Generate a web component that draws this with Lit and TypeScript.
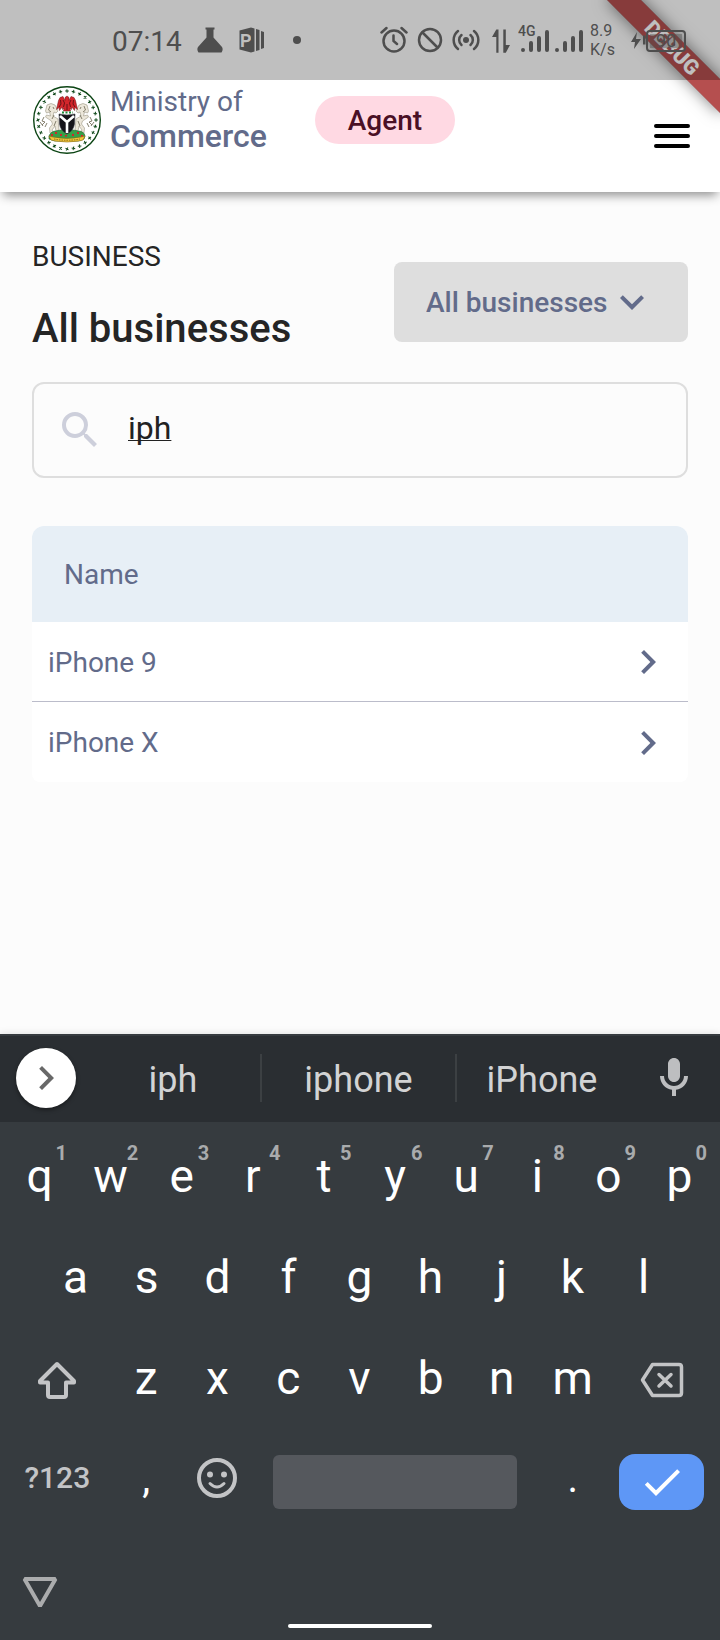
import { LitElement, html, css, svg } from "lit";
import { customElement, state } from "lit/decorators.js";

const chevronRight = html`<svg class="icon" viewBox="0 0 24 24" aria-hidden="true">
  <path d="M8.59 16.59 13.17 12 8.59 7.41 10 6l6 6-6 6z" />
</svg>`;

const shared = css`
  * {
    box-sizing: border-box;
  }
  button {
    font: inherit;
    color: inherit;
    background: none;
    border: 0;
    padding: 0;
    cursor: pointer;
  }
  svg {
    display: block;
    flex: none;
  }
  .icon {
    width: 48px;
    height: 48px;
    fill: currentColor;
  }
`;

@customElement("status-bar")
export class StatusBar extends LitElement {
  static styles = [
    shared,
    css`
      :host {
        display: flex;
        align-items: center;
        justify-content: space-between;
        height: 80px;
        padding: 0 34px 0 112px;
        background: rgba(0, 0, 0, 0.25);
        color: #4e4e4e;
      }
      .group {
        display: flex;
        align-items: center;
      }
      .left {
        gap: 14px;
      }
      .right {
        gap: 6px;
      }
      .time {
        font-size: 28px;
        line-height: 32px;
        padding-top: 4px;
      }
      .speed {
        width: 34px;
        font-size: 16px;
        line-height: 19px;
      }
      .tag {
        font-size: 14px;
        font-weight: 500;
      }
      .level {
        font-size: 18px;
      }
      .logo {
        font-size: 18px;
        font-weight: 700;
        fill: #bfbfbf;
      }
      svg {
        fill: currentColor;
      }
      .line {
        fill: none;
        stroke: currentColor;
        stroke-width: 2.5;
        stroke-linecap: round;
      }
    `,
  ];

  render() {
    return html`
      <div class="group left">
        <span class="time">07:14</span>
        <svg width="28" height="28" viewBox="0 0 28 28">
          <path d="M9.500 1.500h9v2h-1v8l8.500 9.500q1.500 2.500-.5 5.500h-23q-2-3-.5-5.500l8.500-9.500v-8h-1z" />
        </svg>
        <svg width="28" height="28" viewBox="0 0 28 28">
          <path d="M1.500 4.500 13 1.500v25l-11.500-3z" />
          <text class="logo" x="2" y="20.500">P</text>
          <path d="M13 1.500l3.500 1v23l-3.500 1zM18 3l3.500 1v20L18 25zM23 5l3 1v16l-3 1z" />
        </svg>
        <svg width="40" height="28" viewBox="0 0 40 28"><circle cx="17" cy="14" r="4" /></svg>
      </div>
      <div class="group right">
        <svg width="28" height="28" viewBox="0 0 28 28">
          <g class="line">
            <circle cx="14" cy="15" r="10.500" />
            <path d="M13.500 9.500V15l3.500 3M1.500 6.500l5-4.500M26.500 6.500l-5-4.500" />
          </g>
        </svg>
        <svg width="32" height="28" viewBox="0 0 32 28">
          <g class="line"><circle cx="16" cy="14" r="11" /><path d="M8.500 6.500l15 15" /></g>
        </svg>
        <svg width="30" height="28" viewBox="0 0 30 28">
          <circle cx="14" cy="14" r="3" />
          <g class="line">
            <path
              d="M9.500 19a6.500 6.500 0 0 1 0-10M18.500 9a6.500 6.500 0 0 1 0 10M6 23a11.500 11.500 0 0 1 0-18M22 5a11.500 11.500 0 0 1 0 18"
            />
          </g>
        </svg>
        <svg width="24" height="28" viewBox="0 0 24 28">
          <path d="M10.500 3.500v23.200H8.300V11H4L8.300 3.500zM15.300 3.500v23.200h2.500L22 19h-4.200V3.500z" />
        </svg>
        <svg width="66" height="40" viewBox="0 -6 66 40">
          <text class="tag" x="0" y="10">4G</text>
          <g stroke="currentColor" stroke-width="4" stroke-linecap="round">
            <path d="M5 24v0M13 17v7M21 12v12M29 6v18M39 24v0M47 17v7M55 12v12M63 6v18" />
          </g>
        </svg>
        <span class="speed">8.9<br />K/s</span>
        <svg width="56" height="28" viewBox="0 0 56 28">
          <path d="M7 6 1 16h4l-1 7 7-10H6zM13 9.500h2.500v9H13z" />
          <rect x="17" y="5" width="38" height="20" rx="3" fill="none" stroke="currentColor" stroke-width="2" />
          <rect x="20" y="8" width="32" height="14" opacity=".4" />
          <text class="level" x="26" y="21">90</text>
        </svg>
      </div>
    `;
  }
}

/* Coat of arms inside a ring of small stars. */
const ringStars = Array.from({ length: 28 }, (_, i) => {
  const a = (i * Math.PI) / 14;
  const x = 35 + 29 * Math.cos(a);
  const y = 35 + 29 * Math.sin(a);
  return svg`<path d="M${x - 1.8} ${y}h3.600M${x} ${y - 1.8}v3.600" transform="rotate(${i * 17} ${x} ${y})" />`;
});

const horse = svg`
  <path fill="#ece7da" stroke="#9b9583" stroke-width=".6"
    d="M15 20q4-3 8 0l3 6-2 2-2-1-1 4 5 3 1 11-3 1-1-5-3 4 2 3h-4l-.5-5 3-4-1-3-6-4 1-2 4 1-1-4-3 1-1-2z" />
  <path fill="none" stroke="#77725f" stroke-width=".9"
    d="M18 21l-1.500 4 2.500 2M22 30l-2 4M24 36l-2 5M12 32l-2 4 3 1-3 3M8 37l3 4M15 38l-2 4M21 22l1 2" />
`;

const emblem = svg`
  <svg width="70" height="70" viewBox="0 0 70 70" role="img" aria-label="Coat of arms">
    <circle cx="35" cy="35" r="33.300" fill="#fff" stroke="#0b4413" stroke-width="1.400" />
    <g stroke="#124a1c" stroke-width="1" fill="none">${ringStars}</g>
    <g>${horse}</g>
    <g transform="translate(70 0) scale(-1 1)">${horse}</g>
    <path fill="#d3262b" stroke="#6d1216" stroke-width=".5"
      d="M35 11l2 1.500v3l2-4 3 1 1.500 3 2 9-2.500-2-.5 3-2.500-3.500-.5 2.500-1.500-1.500.5 3h-7l.5-3-1.500 1.500-.5-2.500-2.500 3.500-.5-3-2.500 2 2-9 1.500-3 3-1 2 4v-3z" />
    <path fill="none" stroke="#4c0d10" stroke-width=".8"
      d="M31 15l1.500 3-1 4M39 15l-1.500 3 1 4M28.500 15l.5 4-2 3M41.500 15l-.5 4 2 3M35 19v6" />
    <path fill="none" stroke="#1f8a3a" stroke-width="2" stroke-dasharray="2 1.500" d="M30 27.500h11" />
    <path fill="#37a047" stroke="#17642a" stroke-width=".6"
      d="M17 51q2-5 7-5l5-1 6 2 6-2 5 1q6 0 7 5l-1 3-6 2H23l-6-2z" />
    <path fill="#15141a" stroke="#3b3b42" stroke-width=".6"
      d="M27 29q8 2 16 0l-.5 10q-1 7-7.500 10-6.500-3-7.500-10z" />
    <path fill="none" stroke="#fff" stroke-width="2.600" d="M28 31l7 6 7-6M35 36v12" />
    <path fill="#d3262b" d="M19 49h2v2h-2zM23 47h2v2h-2zM28 49h2v2h-2zM40 49h2v2h-2zM45 47h2v2h-2zM49 50h2v2h-2zM33 50h2v1.500h-2z" />
    <path fill="#f1c63c" stroke="#8a6a12" stroke-width=".6"
      d="M17 51l4 1q14 3 28 0l4-1-2 4-4 1q-12 2-24 0l-4-1z" />
    <path fill="none" stroke="#8a6a12" stroke-width="1" stroke-dasharray="1.500 1" d="M22 54q13 2.500 26 0" />
  </svg>
`;

type Key = { label: string; hint?: string };

@customElement("soft-keyboard")
export class SoftKeyboard extends LitElement {
  static styles = [
    shared,
    css`
      :host {
        display: block;
        background: #363b3f;
        color: #fff;
        border-top: 2px solid #363b3f;
        box-shadow: 0 0 8px rgba(0, 0, 0, 0.12);
      }
      .suggestions {
        display: grid;
        grid-template-columns: 86px 174fr 195fr 172fr 93px;
        align-items: center;
        height: 86px;
        padding-bottom: 2px;
        background: #2a2e32;
        color: #d2d3d4;
        font-size: 36px;
      }
      .suggestion {
        height: 48px;
        padding-top: 4px;
        line-height: 44px;
      }
      .suggestion + .suggestion {
        border-left: 2px solid #3c4043;
      }
      .expand {
        display: grid;
        place-items: center;
        justify-self: end;
        width: 60px;
        height: 60px;
        margin-right: 10px;
        border-radius: 50%;
        background: #fff;
        color: #686868;
        box-shadow: 0 2px 4px rgba(0, 0, 0, 0.4);
      }
      .voice {
        display: grid;
        place-items: center;
        color: #bdbec0;
      }
      .keys {
        padding: 6px 5px 0 4px;
      }
      .row {
        display: grid;
        height: 101px;
      }
      .top {
        grid-template-columns: repeat(10, 1fr);
      }
      .home {
        grid-template-columns: repeat(9, 1fr);
        padding: 0 36px;
      }
      .lower {
        grid-template-columns: 3fr repeat(7, 2fr) 3fr;
      }
      .bottom {
        grid-template-columns: 3fr 2fr 2fr 8fr 2fr 3fr;
      }
      .key {
        position: relative;
        display: grid;
        place-items: center;
        min-width: 0;
        padding-bottom: 6px;
        font-size: 46px;
        line-height: 54px;
      }
      .hint {
        position: absolute;
        top: 13px;
        right: 8px;
        font-size: 20px;
        line-height: 24px;
        font-weight: 700;
        color: #a9abad;
      }
      .function {
        color: #c3c4c6;
        padding-bottom: 1px;
      }
      .raised {
        padding-bottom: 7px;
      }
      .mode {
        font-size: 30px;
        font-weight: 500;
      }
      .mark {
        font-size: 40px;
      }
      .space {
        align-self: center;
        height: 54px;
        margin: 0 20px;
        border-radius: 6px;
        background: #55585d;
      }
      .enter {
        display: grid;
        place-items: center;
        align-self: center;
        height: 56px;
        margin: 0 11px;
        border-radius: 16px;
        background: #5e97f6;
      }
      .stroke {
        fill: none;
        stroke: currentColor;
        stroke-linejoin: round;
        stroke-linecap: round;
      }
      .nav {
        display: grid;
        grid-template-columns: 1fr auto 1fr;
        height: 108px;
        padding: 24px 20px 12px;
      }
      .hide {
        align-self: center;
        justify-self: start;
        color: #abacad;
      }
      .pill {
        align-self: end;
        width: 144px;
        height: 4px;
        border-radius: 2px;
        background: #fff;
      }
    `,
  ];

  private key = ({ label, hint }: Key) => html`
    <button class="key" type="button">${label}${hint ? html`<span class="hint">${hint}</span>` : ""}</button>
  `;

  render() {
    const top = [..."qwertyuiop"].map((label, i) => ({ label, hint: String((i + 1) % 10) }));
    const home = [..."asdfghjkl"].map((label) => ({ label }));
    const lower = [..."zxcvbnm"].map((label) => ({ label }));
    return html`
      <div class="suggestions">
        <button class="expand" type="button" aria-label="More tools">${chevronRight}</button>
        ${["iph", "iphone", "iPhone"].map((w) => html`<button class="suggestion" type="button">${w}</button>`)}
        <button class="voice" type="button" aria-label="Voice input">
          <svg class="icon" viewBox="0 0 24 24">
            <path
              d="M12 14c1.660 0 3-1.340 3-3V5c0-1.660-1.340-3-3-3S9 3.340 9 5v6c0 1.660 1.340 3 3 3zM17 11c0 2.760-2.240 5-5 5s-5-2.240-5-5H5c0 3.530 2.610 6.430 6 6.920V21h2v-3.080c3.390-.49 6-3.390 6-6.920z"
            />
          </svg>
        </button>
      </div>
      <div class="keys">
        <div class="row top">${top.map(this.key)}</div>
        <div class="row home">${home.map(this.key)}</div>
        <div class="row lower">
          <button class="key function" type="button" aria-label="Shift">
            <svg width="40" height="38" viewBox="0 0 40 38">
              <path
                class="stroke"
                stroke-width="4"
                d="M20 3 3 20v1.500h8V34q0 2 2 2h14q2 0 2-2V21.500h8V20z"
              />
            </svg>
          </button>
          ${lower.map(this.key)}
          <button class="key function" type="button" aria-label="Backspace">
            <svg width="44" height="36" viewBox="0 0 44 36">
              <path
                class="stroke"
                stroke-width="3.500"
                d="M12.500 2.500H39q2.500 0 2.500 2.500v26q0 2.500-2.500 2.500H12.500L2.500 18zM19 12.500l12 11.500M31 12.500 19 24"
              />
            </svg>
          </button>
        </div>
        <div class="row bottom">
          <button class="key function raised mode" type="button">?123</button>
          <button class="key mark" type="button">,</button>
          <button class="key function raised" type="button" aria-label="Emoji">
            <svg width="40" height="40" viewBox="0 0 40 40">
              <g class="stroke">
                <circle cx="20" cy="20" r="18" stroke-width="4" />
                <path stroke-width="3" d="M13 25.500q7 7 14 0" />
              </g>
              <circle cx="13" cy="16.500" r="3" fill="currentColor" />
              <circle cx="27" cy="16.500" r="3" fill="currentColor" />
            </svg>
          </button>
          <button class="space" type="button" aria-label="Space"></button>
          <button class="key mark" type="button">.</button>
          <button class="enter" type="button" aria-label="Done">
            <svg class="icon" viewBox="0 0 24 24">
              <path d="M9 16.170 4.830 12l-1.420 1.410L9 19 21 7l-1.410-1.410z" />
            </svg>
          </button>
        </div>
      </div>
      <div class="nav">
        <button class="hide" type="button" aria-label="Hide keyboard">
          <svg width="40" height="34" viewBox="0 0 40 34">
            <path fill="none" stroke="currentColor" stroke-width="4" stroke-linejoin="bevel" d="M4.500 4h31L20 31z" />
          </svg>
        </button>
        <span class="pill"></span>
      </div>
    `;
  }
}

@customElement("app-root")
export class AppRoot extends LitElement {
  static styles = [
    shared,
    css`
      :host {
        position: relative;
        display: flex;
        flex-direction: column;
        min-height: 100vh;
        background: #fcfcfc;
        color: #626b8a;
        font-family: Roboto, "Liberation Sans", sans-serif;
        font-size: 28px;
        line-height: 33px;
      }
      status-bar {
        position: relative;
        z-index: 2;
      }
      .backdrop {
        background: #fff;
      }
      .ribbon-corner {
        position: absolute;
        z-index: 1;
        top: 0;
        right: 0;
        width: 180px;
        height: 180px;
        overflow: hidden;
        pointer-events: none;
      }
      .ribbon {
        position: absolute;
        top: 36px;
        right: -32px;
        width: 160px;
        height: 24px;
        background: rgba(150, 4, 4, 0.7);
        box-shadow: 0 0 16px rgba(0, 0, 0, 0.5);
        color: #fff;
        font-size: 21px;
        font-weight: 900;
        line-height: 24px;
        text-align: center;
        transform: rotate(45deg);
      }
      .app-bar {
        display: flex;
        align-items: center;
        justify-content: space-between;
        height: 112px;
        padding: 0 24px 0 32px;
        background: #fff;
        box-shadow: 0 6px 10px -3px rgba(0, 0, 0, 0.45);
        clip-path: inset(0 0 -24px);
      }
      .brand {
        display: flex;
        align-items: center;
        align-self: flex-start;
        gap: 8px;
        padding-top: 5px;
      }
      .ministry {
        display: grid;
        line-height: 34px;
        padding-bottom: 2px;
      }
      .department {
        font-size: 32px;
        font-weight: 500;
      }
      .role {
        margin-left: 40px;
        padding: 8px 33px 7px;
        border-radius: 24px;
        background: #ffd9e3;
        color: #4a1025;
        font-weight: 500;
      }
      .menu {
        padding: 6px;
      }
      main {
        display: flex;
        flex-direction: column;
        padding: 48px 32px;
      }
      .heading {
        display: flex;
        align-items: center;
        justify-content: space-between;
        margin-bottom: 18px;
        color: #252525;
      }
      .titles {
        display: grid;
        gap: 32px;
        padding-bottom: 12px;
      }
      h1,
      p {
        margin: 0;
      }
      h1 {
        font-size: 40px;
        line-height: 47px;
        font-weight: 500;
      }
      .filter {
        display: grid;
        align-items: center;
        color: #626b8a;
      }
      .filter > * {
        grid-area: 1 / 1;
      }
      .filter .icon {
        justify-self: end;
        margin-right: 32px;
        pointer-events: none;
      }
      select {
        appearance: none;
        height: 80px;
        padding: 0 80px 0 32px;
        border: 0;
        border-radius: 8px;
        background: #dedede;
        color: inherit;
        font: inherit;
        font-weight: 500;
      }
      .search {
        display: flex;
        align-items: center;
        gap: 24px;
        height: 96px;
        margin-bottom: 48px;
        padding: 0 22px;
        border: 2px solid #dedede;
        border-radius: 12px;
        color: #cdcfdb;
      }
      .search input {
        flex: 1;
        min-width: 0;
        padding: 0 0 4px;
        border: 0;
        outline: 0;
        background: none;
        color: #222;
        font: inherit;
        font-size: 32px;
        line-height: 40px;
        text-decoration: underline 1px;
        text-decoration-skip-ink: none;
      }
      table {
        width: 100%;
        border-collapse: separate;
        border-spacing: 0;
        border-radius: 12px 12px 8px 8px;
        overflow: hidden;
        background: #fff;
      }
      th {
        height: 96px;
        padding: 0 32px;
        background: #e7eff6;
        font-weight: 400;
        text-align: left;
      }
      td {
        height: 80px;
        padding: 1px 16px 0;
      }
      tr:not(:last-child) td {
        border-bottom: 1px solid #bbbcca;
      }
      .open {
        display: block;
        margin-left: auto;
      }
      soft-keyboard {
        margin-top: auto;
      }
    `,
  ];

  @state() private query = "iph";

  private products = ["iPhone 9", "iPhone X"];

  render() {
    const rows = this.products.filter((p) => p.toLowerCase().includes(this.query.toLowerCase()));
    return html`
      <div class="ribbon-corner"><div class="ribbon">DEBUG</div></div>
      <div class="backdrop"><status-bar></status-bar></div>
      <header class="app-bar">
        <div class="brand">
          ${emblem}
          <div class="ministry"><span>Ministry of</span><span class="department">Commerce</span></div>
          <span class="role">Agent</span>
        </div>
        <button class="menu" type="button" aria-label="Menu">
          <svg width="36" height="24" viewBox="0 0 36 24">
            <path stroke="#000" stroke-width="4" stroke-linecap="round" d="M2 2h32M2 12h32M2 22h32" />
          </svg>
        </button>
      </header>
      <main>
        <div class="heading">
          <div class="titles">
            <p>BUSINESS</p>
            <h1>All businesses</h1>
          </div>
          <div class="filter">
            <select aria-label="Filter businesses">
              <option>All businesses</option>
            </select>
            <svg class="icon" viewBox="0 0 24 24" aria-hidden="true">
              <path d="M7.410 8.590 12 13.170l4.590-4.580L18 10l-6 6-6-6z" />
            </svg>
          </div>
        </div>
        <label class="search">
          <svg class="icon" viewBox="0 0 24 24" role="img" aria-label="Search">
            <path
              d="M15.500 14h-.79l-.28-.27A6.470 6.470 0 0 0 16 9.500 6.500 6.500 0 1 0 9.500 16c1.610 0 3.090-.59 4.230-1.570l.27.28v.79l5 4.990L20.490 19l-4.990-5zm-6 0C7.010 14 5 11.990 5 9.500S7.010 5 9.500 5 14 7.010 14 9.500 11.990 14 9.500 14z"
            />
          </svg>
          <input
            type="text"
            .value=${this.query}
            @input=${(e: Event) => (this.query = (e.target as HTMLInputElement).value)}
          />
        </label>
        <table>
          <thead>
            <tr>
              <th colspan="2" scope="col">Name</th>
            </tr>
          </thead>
          <tbody>
            ${rows.map(
              (name) => html`<tr>
                <td>${name}</td>
                <td><button class="open" type="button" aria-label="Open ${name}">${chevronRight}</button></td>
              </tr>`,
            )}
          </tbody>
        </table>
      </main>
      <soft-keyboard></soft-keyboard>
    `;
  }
}
